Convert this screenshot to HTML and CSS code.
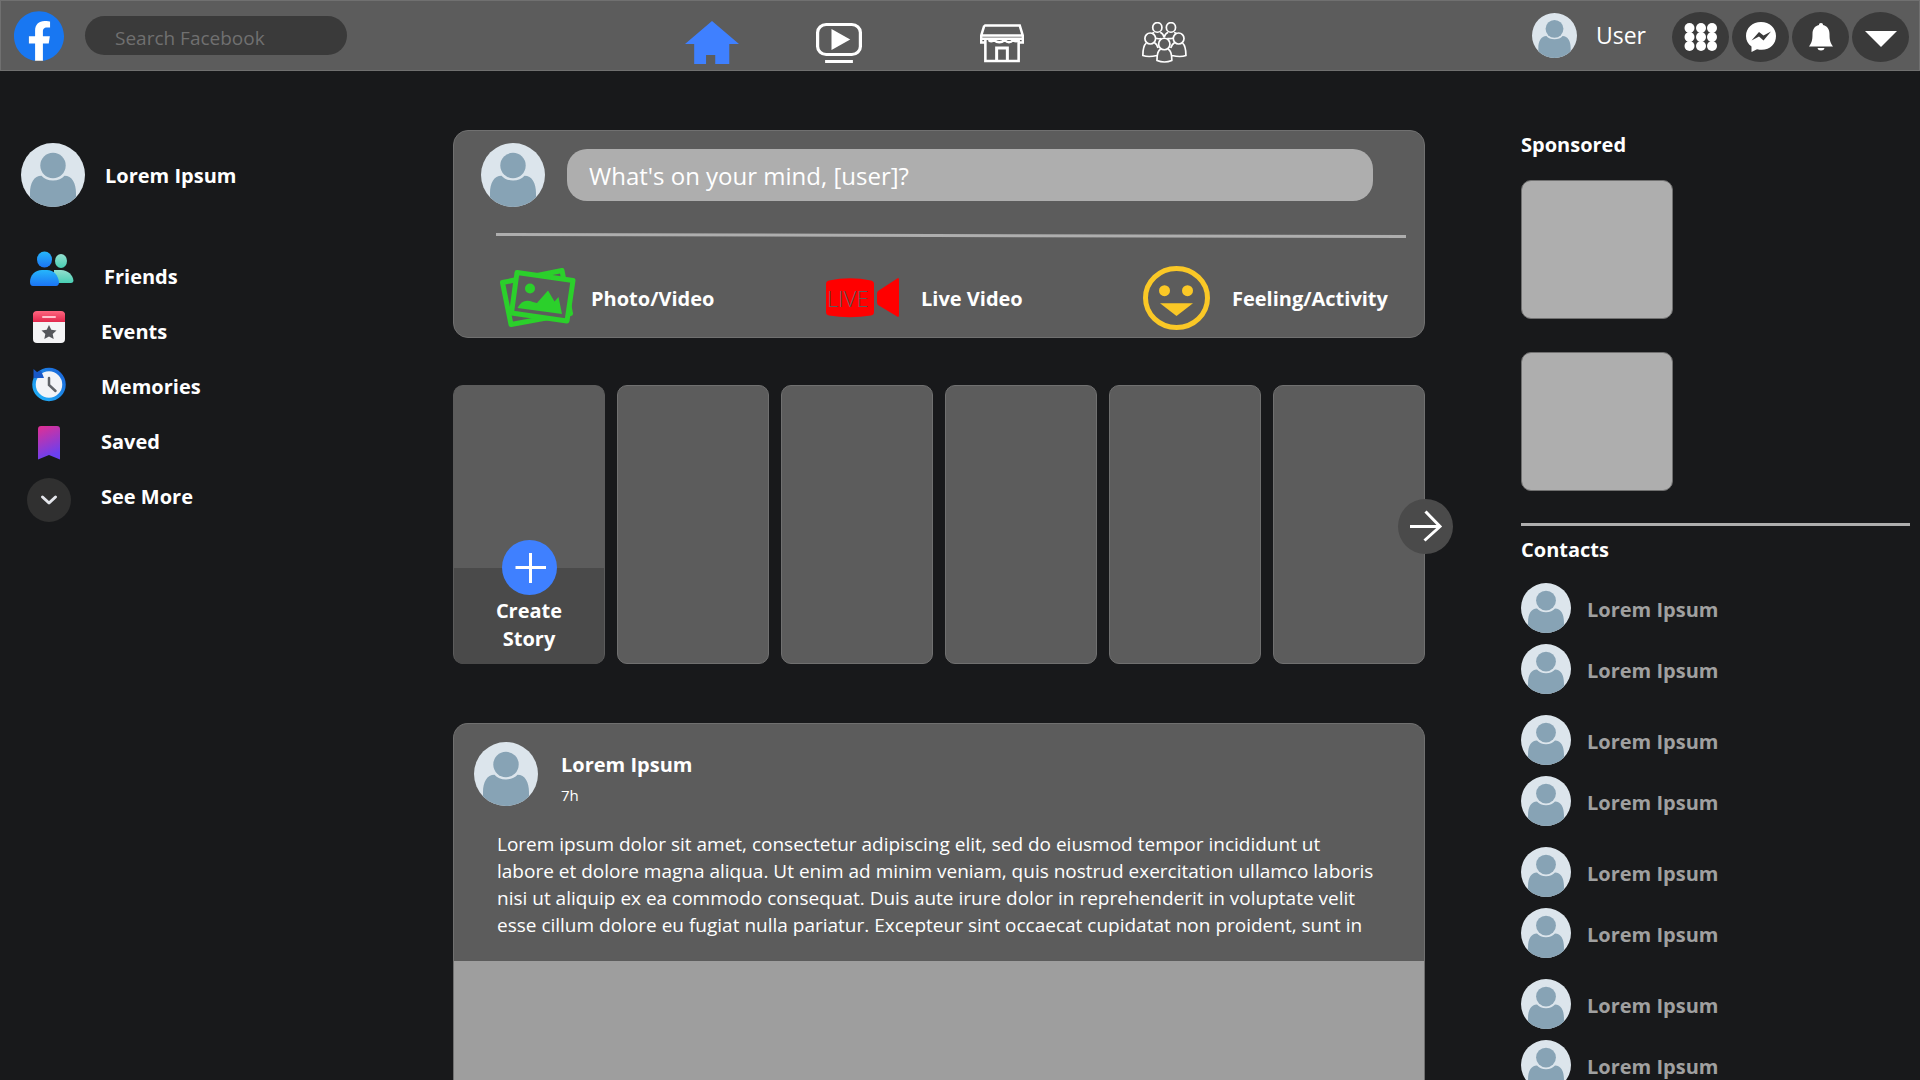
FILE: index.html
```html
<!DOCTYPE html>
<html lang="en">
<head>
<meta charset="utf-8">
<meta name="viewport" content="width=device-width, initial-scale=1">
<title>Facebook</title>
<link rel="stylesheet" href="styles.css">
</head>
<body>
<svg class="sprite" aria-hidden="true">
  <symbol id="avatar" viewBox="0 0 64 64">
    <clipPath id="avatar-clip"><circle cx="32" cy="32" r="32"/></clipPath>
    <circle cx="32" cy="32" r="32" fill="#dce5ec"/>
    <g clip-path="url(#avatar-clip)" fill="#87a3b5">
      <circle cx="32" cy="22.5" r="12.7"/>
      <path d="M9 64V50C9 40 13 32.7 20.5 32.7C23 35.7 27 37.4 32 37.4C37 37.4 41 35.7 43.5 32.7C51 32.7 55 40 55 50V64Z"/>
    </g>
  </symbol>
</svg>
<div class="app">
  <header class="topbar">
    <div class="topbar-left">
      <a class="logo" href="#" aria-label="Facebook">
        <svg width="50" height="50" viewBox="0 0 24 24"><path fill="#fff" d="M7 4.500h10.500v15.500H14v3.900h-4V20H7z"/><path fill="#1877f2" d="M24 12.073c0-6.627-5.373-12-12-12s-12 5.373-12 12c0 5.99 4.388 10.954 10.125 11.854v-8.385H7.078v-3.47h3.047V9.43c0-3.007 1.792-4.669 4.533-4.669 1.312 0 2.686.235 2.686.235v2.953H15.83c-1.491 0-1.956.925-1.956 1.874v2.25h3.328l-.532 3.47h-2.796v8.385C19.612 23.027 24 18.062 24 12.073z"/></svg>
      </a>
      <input class="search" type="search" placeholder="Search Facebook" aria-label="Search Facebook">
    </div>
    <nav class="tabs" aria-label="Main">
      <a href="#" aria-label="Home"><svg width="54" height="44" viewBox="0 0 50 44" preserveAspectRatio="none"><path fill="#3f80ff" d="M25 0L50 23H41V43H28V34H19.500V43H8.500V23H0Z"/></svg></a>
      <a href="#" aria-label="Watch"><svg width="46" height="41" viewBox="0 0 43 41" preserveAspectRatio="none" fill="#fff"><rect x="1.500" y="1.500" width="40" height="30" rx="8" fill="none" stroke="#fff" stroke-width="3"/><path d="M14.500 6L32 16.500L14.500 27Z"/><rect x="8.500" y="37" width="26" height="3"/></svg></a>
      <a class="tab-spaced" href="#" aria-label="Marketplace"><svg width="44" height="39" viewBox="0 0 41 39" preserveAspectRatio="none" fill="none" stroke="#fff" stroke-width="2.400"><path d="M4 1.500H37L40 12V18.500H36.500M4 1.500L1 12V18.500H5M1 11.500H40M1 14.800H40M5 16V37H36V16"/><path d="M8 16q3 2.500 5 0q5 4.500 10 0q4 4.500 8 0q3 2.500 5 0"/><path stroke-width="2.800" d="M15.500 37V24H25.500V37"/></svg></a>
      <a class="tab-spaced" href="#" aria-label="Groups"><svg width="45" height="42" viewBox="0 0 42 42" preserveAspectRatio="none" fill="none" stroke="#fff" stroke-width="1.600"><ellipse cx="14.300" cy="5.400" rx="4.300" ry="4.800"/><ellipse cx="27" cy="5.400" rx="4.300" ry="4.800"/><ellipse cx="7.700" cy="16.500" rx="5" ry="5.500"/><ellipse cx="34.200" cy="16.500" rx="5" ry="5.500"/><ellipse cx="20.800" cy="22" rx="5.300" ry="5.800"/><path d="M11.500 10.500Q9.500 11 9 12M17 10.200Q20 11.500 20.600 15.500M24.400 10.200Q21.500 11.500 20.600 15.500M30 10.500Q32 11 32.500 12M13 16Q14 17 18 16.500M29 16Q27.500 17 23.500 16.500"/><path d="M4 21Q.8 24 .8 33.500Q6 35.500 14 33.500M11.500 20.500Q14 22 15 26M37.800 21Q41 24 41 33.500Q36 35.500 28 33.500M30.500 20.500Q28 22 26.800 26M17.500 27Q13.800 29 14 38.500Q21 41.500 27.800 38.500Q28 29 24.200 27"/></svg></a>
    </nav>
    <div class="topbar-right">
      <a class="user" href="#"><svg class="avatar-user"><use href="#avatar"/></svg><span>User</span></a>
      <div class="actions">
        <button class="round" type="button" aria-label="Menu"><svg width="34" height="30" viewBox="0 0 34 30" fill="#fff"><circle cx="5.500" cy="6" r="5"/><circle cx="17" cy="6" r="5"/><circle cx="28" cy="6" r="5"/><circle cx="5.500" cy="15" r="5"/><circle cx="17" cy="15" r="5"/><circle cx="28" cy="15" r="5"/><circle cx="5.500" cy="24" r="5"/><circle cx="17" cy="24" r="5"/><circle cx="28" cy="24" r="5"/></svg></button>
        <button class="round" type="button" aria-label="Messenger"><svg width="30" height="30" viewBox="0 0 30 30"><path fill="#fff" d="M15 0C6.500 0 0 6 0 14C0 18.500 2 22 5.500 24.500V30L11 27.200C22 30 30 23 30 14C30 6 23.500 0 15 0Z"/><path fill="#3a3a3a" d="M5.500 18.500L13 10L17.500 13.500L25 9.500L17.500 18.500L13 14.500Z"/></svg></button>
        <button class="round" type="button" aria-label="Notifications"><svg width="24" height="28" viewBox="0 0 24 28" fill="#fff"><path d="M12 0C10.500 0 10 .8 10 2C5.500 3 3.500 6.500 3.500 11C3.500 18 2.500 20 0 23.500H24C21.500 20 20.500 18 20.500 11C20.500 6.500 18.500 3 14 2C14 .8 13.500 0 12 0ZM8.500 25H15.500Q15 27.500 12 27.500Q9 27.500 8.500 25Z"/></svg></button>
        <button class="round" type="button" aria-label="Account"><svg width="32" height="21" viewBox="0 0 32 21"><path fill="#fff" d="M0 5H32L16 21Z"/></svg></button>
      </div>
    </div>
  </header>

  <main class="columns">
    <aside class="sidebar">
      <a class="profile" href="#"><svg class="avatar-large"><use href="#avatar"/></svg>Lorem Ipsum</a>
      <nav class="shortcuts" aria-label="Shortcuts">
        <a href="#"><svg width="47" height="55" viewBox="0 0 47 55">
          <defs><linearGradient id="fr1" x2="0" y2="1"><stop stop-color="#26b6fb"/><stop offset="1" stop-color="#1b74f5"/></linearGradient><linearGradient id="fr2" x2="0" y2="1"><stop stop-color="#93dfcf"/><stop offset="1" stop-color="#48cfb4"/></linearGradient></defs>
          <g fill="url(#fr2)"><ellipse cx="34" cy="12" rx="6" ry="7"/><path d="M27 21H34C41 21 46 26 46.500 32Q46 34 44 34H27Z"/></g>
          <g fill="url(#fr1)"><ellipse cx="17.500" cy="10.500" rx="7.500" ry="8"/><path d="M3 33C3 26 8 21 15 21H20C27 21 31 26 32 33Q32 37 29 37H6Q3 37 3 33Z"/></g></svg>Friends</a>
        <a href="#"><svg width="44" height="55" viewBox="0 0 44 55">
          <defs><linearGradient id="ev" x2="0" y2="1"><stop stop-color="#ff6680"/><stop offset="1" stop-color="#e2284d"/></linearGradient></defs>
          <g transform="translate(0 1)"><rect x="6" y="7" width="32" height="31" rx="4" fill="#f4f4f6"/><path fill="url(#ev)" d="M6 17V10Q6 6 10 6H34Q38 6 38 10V17Z"/><rect x="15" y="11" width="14" height="2" rx="1" fill="#ffc4d0"/><path fill="#55575c" d="M22 20L24.300 24.700L29.500 25.400L25.700 29L26.700 34L22 31.500L17.300 34L18.300 29L14.500 25.400L19.700 24.700Z"/></g></svg>Events</a>
        <a href="#"><svg width="44" height="55" viewBox="0 0 44 55">
          <defs><linearGradient id="me" x1="1" x2="0" y2="1"><stop stop-color="#1b62d8"/><stop offset="1" stop-color="#20b4fa"/></linearGradient></defs>
          <g transform="translate(0 1)"><circle cx="22" cy="24.500" r="15" fill="#f2f3f7" stroke="url(#me)" stroke-width="3.500"/><path fill="#1858c8" d="M6.500 9L10 12L14 10.500L17 18H6.500Z"/><path fill="none" stroke="#606369" stroke-width="2.500" stroke-linecap="round" d="M22 18V25L28.500 31"/></g></svg>Memories</a>
        <a href="#"><svg width="44" height="55" viewBox="0 0 44 55">
          <defs><linearGradient id="sv" x2=".3" y2="1"><stop stop-color="#e22f92"/><stop offset="1" stop-color="#6a40f0"/></linearGradient></defs>
          <path fill="url(#sv)" d="M11 15Q11 12 14 12H30Q33 12 33 15V45.500L22 41L11 45.500Z"/></svg>Saved</a>
        <a href="#"><svg width="44" height="55" viewBox="0 0 44 55"><circle cx="22" cy="31" r="22" fill="#303030"/><path fill="none" stroke="#e4e6eb" stroke-width="3" stroke-linecap="round" stroke-linejoin="round" d="M15.500 28L22 34L28.500 28"/></svg>See More</a>
      </nav>
    </aside>

    <div class="feed">
      <section class="composer" aria-label="Create post">
        <div class="composer-row">
          <svg class="avatar-large"><use href="#avatar"/></svg>
          <input class="composer-input" type="text" placeholder="What's on your mind, [user]?" aria-label="What's on your mind?">
        </div>
        <svg class="composer-rule" viewBox="0 0 910 5" preserveAspectRatio="none" aria-hidden="true"><path d="M0 1.500L910 3.500" stroke="#aeaeae" stroke-width="3"/></svg>
        <div class="composer-actions">
          <button type="button"><svg width="76" height="60" viewBox="0 0 76 60" stroke="#2bd02b" stroke-width="5" stroke-linejoin="round"><path fill="none" d="M2.500 14.500L62 2.500L70.500 45.500L11 56.500Z"/><path fill="#5c5c5c" d="M17 4.500L73 12.500L67 53L11.500 45Z"/><circle cx="30" cy="20.500" r="5" fill="#2bd02b" stroke="none"/><path stroke="none" fill="#2bd02b" d="M17.500 40Q22 31 30 33Q34 34.500 37 35L48 22.500L54.500 33.500L58.500 29L62 46Z"/></svg>Photo/Video</button>
          <button type="button"><svg width="80" height="40" viewBox="0 0 80 40" fill="red"><path d="M0 6Q0 3 3 2.500Q24 -2 45 2.500Q48 3 48 6V34Q48 37 45 37.500Q24 41 3 37.500Q0 37 0 34ZM72 0Q73 0 73 2V37Q73 39 72 39L52 27Q51 26 51 24V15.500Q51 14 52 13Z"/><text class="live-text" x="1" y="29">LIVE</text></svg>Live Video</button>
          <button type="button"><svg width="74" height="64" viewBox="0 0 74 64" fill="#fac826"><ellipse cx="33.500" cy="32" rx="31" ry="29.500" fill="none" stroke="#fac826" stroke-width="5"/><circle cx="21.500" cy="24.700" r="5.500"/><circle cx="44.500" cy="24.700" r="5.500"/><path d="M17 37.300H50L33.500 50Z"/></svg>Feeling/Activity</button>
        </div>
      </section>

      <section class="stories" aria-label="Stories">
        <button class="story story-create" type="button">
          <span class="story-panel"><svg width="55" height="55" viewBox="0 0 55 55"><circle cx="27.500" cy="27.500" r="27.500" fill="#3f80ff"/><path stroke="#fff" stroke-width="3" d="M13.500 27.500H44M28.500 13V43"/></svg><span class="story-label">Create Story</span></span>
        </button>
        <div class="story"></div>
        <div class="story"></div>
        <div class="story"></div>
        <div class="story"></div>
        <div class="story"></div>
        <button class="stories-next" type="button" aria-label="Next stories"><svg width="55" height="55" viewBox="0 0 55 55" fill="none" stroke="#fff" stroke-width="3"><path d="M12 27.500H42M27.500 12.500L42 27.500L26.500 41.500"/></svg></button>
      </section>

      <article class="post">
        <header class="post-head">
          <svg class="avatar-large"><use href="#avatar"/></svg>
          <div><h2>Lorem Ipsum</h2><time>7h</time></div>
        </header>
        <p class="post-text">Lorem ipsum dolor sit amet, consectetur adipiscing elit, sed do eiusmod tempor incididunt ut labore et dolore magna aliqua. Ut enim ad minim veniam, quis nostrud exercitation ullamco laboris nisi ut aliquip ex ea commodo consequat. Duis aute irure dolor in reprehenderit in voluptate velit esse cillum dolore eu fugiat nulla pariatur. Excepteur sint occaecat cupidatat non proident, sunt in</p>
        <div class="post-media"></div>
      </article>
    </div>

    <aside class="rail">
      <h2>Sponsored</h2>
      <div class="ad"></div>
      <div class="ad"></div>
      <hr>
      <h2>Contacts</h2>
      <div class="contacts">
        <ul><li><a href="#"><svg><use href="#avatar"/></svg>Lorem Ipsum</a></li><li><a href="#"><svg><use href="#avatar"/></svg>Lorem Ipsum</a></li></ul>
        <ul><li><a href="#"><svg><use href="#avatar"/></svg>Lorem Ipsum</a></li><li><a href="#"><svg><use href="#avatar"/></svg>Lorem Ipsum</a></li></ul>
        <ul><li><a href="#"><svg><use href="#avatar"/></svg>Lorem Ipsum</a></li><li><a href="#"><svg><use href="#avatar"/></svg>Lorem Ipsum</a></li></ul>
        <ul><li><a href="#"><svg><use href="#avatar"/></svg>Lorem Ipsum</a></li><li><a href="#"><svg><use href="#avatar"/></svg>Lorem Ipsum</a></li></ul>
      </div>
    </aside>
  </main>
</div>
</body>
</html>
```
FILE: styles.css
```css
* { box-sizing: border-box; }

body {
  margin: 0;
  background: #18191b;
  color: #fff;
  font: 20px/27px "Open Sans", "Noto Sans", sans-serif;
}

a { color: inherit; text-decoration: none; }
button, input { font: inherit; color: inherit; border: 0; padding: 0; background: none; }
button { cursor: pointer; }
svg { display: block; flex: none; }
h2, p, ul { margin: 0; padding: 0; }
h2 { font-size: 20px; line-height: 28px; font-weight: 700; }

.sprite { position: absolute; width: 0; height: 0; }

.app { height: 100vh; display: flex; flex-direction: column; }

/* top bar */
.topbar, .columns {
  display: grid;
  grid-template-columns: 453fr minmax(0, 972px) 495fr;
}
.topbar {
  flex: none;
  height: 71px;
  background: #5c5c5c;
  box-shadow: inset 0 0 0 1px #707070;
}
.topbar-left { display: flex; align-items: center; gap: 21px; padding-left: 14px; }
.search {
  width: 262px;
  height: 39px;
  padding: 4px 30px 0;
  border-radius: 20px;
  background: #3a3a3a;
  font-size: 19px;
}
.search::placeholder { color: #707070; opacity: 1; }
.tabs {
  display: flex;
  align-items: center;
  gap: 77px;
  padding: 15px 0 0 232px;
}
.tab-spaced { margin-left: 41px; }
.topbar-right { display: flex; align-items: center; justify-content: flex-end; gap: 26px; padding-right: 11px; }
.user { display: flex; align-items: center; gap: 19px; font-size: 23px; }
.avatar-user { width: 45px; height: 45px; }
.actions { display: flex; gap: 3px; padding-top: 2px; }
.round {
  width: 57px;
  height: 50px;
  display: grid;
  place-items: center;
  border-radius: 50%;
  background: #3a3a3a;
}

/* columns */
.columns { flex: 1; min-height: 0; overflow-y: auto; scrollbar-width: none; }
.avatar-large { width: 64px; height: 64px; }

.sidebar { padding: 72px 0 0 21px; font-weight: 700; }
.profile { display: flex; align-items: center; gap: 20px; }
.shortcuts { padding: 42px 0 0 6px; }
.shortcuts a { display: flex; align-items: center; gap: 30px; height: 55px; }

.feed { padding-top: 59px; }

/* composer */
.composer {
  height: 208px;
  border: 1px solid #707070;
  border-radius: 15px;
  background: #5c5c5c;
}
.composer-row { display: flex; align-items: center; gap: 22px; padding: 12px 51px 0 27px; }
.composer-input {
  flex: 1;
  min-width: 0;
  height: 52px;
  padding: 0 22px;
  border-radius: 20px;
  background: #aeaeae;
  font-size: 24px;
}
.composer-input::placeholder { color: #fff; opacity: 1; }
.composer-rule { width: calc(100% - 60px); height: 5px; margin: 26px 18px 28px 42px; }
.composer-actions {
  display: grid;
  grid-template-columns: 326fr 317fr 245fr;
  padding: 0 36px 0 46px;
}
.composer-actions button { display: flex; align-items: center; gap: 15px; font-weight: 700; }
.live-text { font-size: 22px; font-weight: 300; fill: #5c5c5c; }

/* stories */
.stories {
  position: relative;
  display: grid;
  grid-template-columns: repeat(6, minmax(0, 1fr));
  gap: 12px;
  margin-top: 47px;
}
.story {
  height: 279px;
  border: 1px solid #707070;
  border-radius: 10px;
  background: #5c5c5c;
  overflow: hidden;
}
.story-create { display: flex; align-items: flex-end; border-color: #5c5c5c; border-bottom: 0; }
.story-panel {
  width: 100%;
  height: 96px;
  display: flex;
  flex-direction: column;
  align-items: center;
  gap: 2px;
  background: #4a4a4a;
}
.story-panel svg { margin-top: -28px; }
.story-label { width: 80px; line-height: 28px; font-weight: 700; }
.stories-next {
  position: absolute;
  right: -28px;
  top: 114px;
  border-radius: 50%;
  background: #4a4a4a;
}

/* post */
.post {
  margin-top: 59px;
  border: 1px solid #707070;
  border-bottom: 0;
  border-radius: 15px 15px 0 0;
  background: #5c5c5c;
}
.post-head { display: flex; gap: 23px; padding: 18px 20px 0; }
.post-head div { padding-top: 9px; }
.post-head time { display: block; padding-top: 4px; font-size: 15px; line-height: 24px; }
.post-text { padding: 24px 50px 22px 43px; font-size: 19px; }
.post-media { height: 400px; background: #9e9e9e; }

/* right rail */
.rail { padding: 60px 10px 0 96px; }
.ad {
  width: 152px;
  height: 139px;
  margin-top: 21px;
  border: 1px solid #707070;
  border-radius: 10px;
  background: #aeaeae;
}
.ad + .ad { margin-top: 33px; }
.rail hr { height: 3px; margin: 32px 0 10px; border: 0; background: #aeaeae; }
.contacts { display: grid; gap: 21px; padding-top: 19px; color: #a0a0a0; font-weight: 700; }
.contacts ul { display: grid; gap: 11px; list-style: none; }
.contacts a { display: flex; align-items: flex-end; gap: 16px; line-height: 46px; }
.contacts svg { width: 50px; height: 50px; }
```
